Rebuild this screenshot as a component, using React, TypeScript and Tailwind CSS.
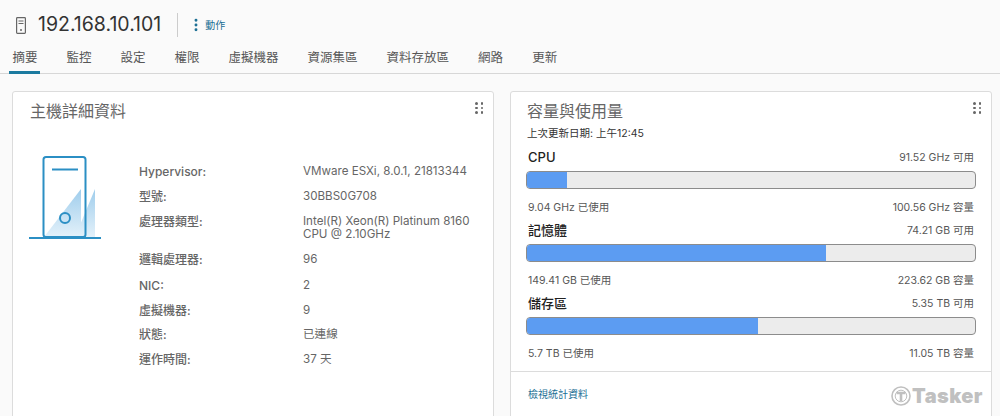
import { EllipsisVertical } from 'lucide-react';

const font = "font-['Inter','Noto_Sans_CJK_TC',sans-serif]";

const tabs = ['摘要', '監控', '設定', '權限', '虛擬機器', '資源集區', '資料存放區', '網路', '更新'];

const details = [
  { label: 'Hypervisor:', value: ['VMware ESXi, 8.0.1, 21813344'], h: 'h-[25px]' },
  { label: '型號:', value: ['30BBS0G708'], h: 'h-[25px]' },
  { label: '處理器類型:', value: ['Intel(R) Xeon(R) Platinum 8160', 'CPU @ 2.10GHz'], h: 'h-[38px]' },
  { label: '邏輯處理器:', value: ['96'], h: 'h-[26px]' },
  { label: 'NIC:', value: ['2'], h: 'h-[25px]' },
  { label: '虛擬機器:', value: ['9'], h: 'h-[24px]' },
  { label: '狀態:', value: ['已連線'], h: 'h-[25px]' },
  { label: '運作時間:', value: ['37 天'], h: 'h-[25px]' },
];

const meters = [
  { name: 'CPU', free: '91.52 GHz 可用', used: '9.04 GHz 已使用', total: '100.56 GHz 容量', bar: 'w-[9%]' },
  { name: '記憶體', free: '74.21 GB 可用', used: '149.41 GB 已使用', total: '223.62 GB 容量', bar: 'w-[66.8%]' },
  { name: '儲存區', free: '5.35 TB 可用', used: '5.7 TB 已使用', total: '11.05 TB 容量', bar: 'w-[51.5%]' },
];

function HostIcon() {
  return (
    <svg width="73" height="84" viewBox="0 0 73 84" fill="none" className="shrink-0">
      <defs>
        <linearGradient id="fade" x1="0" y1="0" x2="0" y2="1">
          <stop offset="0" stopColor="#9fcdec" />
          <stop offset="1" stopColor="#e3f1fa" />
        </linearGradient>
      </defs>
      <path d="M15 81 L52 33 V81 Z" fill="url(#fade)" />
      <path d="M46 81 L66 33 V81 Z" fill="url(#fade)" />
      <rect x="14.5" y="1" width="42" height="80" rx="2.5" stroke="#2b8fc4" strokeWidth="2" />
      <path d="M23 13.5 H49" stroke="#2b8fc4" strokeWidth="2" />
      <circle cx="36" cy="62" r="5" stroke="#2b8fc4" strokeWidth="2" />
      <path d="M0 82 H72" stroke="#2b8fc4" strokeWidth="2" />
    </svg>
  );
}

function Grip() {
  return (
    <div className="grid grid-cols-2 gap-x-[3px] gap-y-[2px]">
      {[0, 1, 2, 3, 4, 5].map((i) => (
        <span key={i} className="w-[2.5px] h-[2.5px] rounded-full bg-[#666]" />
      ))}
    </div>
  );
}

export default function App() {
  return (
    <div className={`relative w-[1000px] h-[416px] overflow-hidden bg-[#fafafa] text-[#565656] ${font}`}>
      <div className="h-[42px] flex items-center pl-[16px] pt-[8px]">
        <svg width="10" height="17" viewBox="0 0 10 17" fill="none" className="mr-[12px]">
          <rect x="0.6" y="0.6" width="8.8" height="15.8" rx="0.8" stroke="#666" strokeWidth="1.2" />
          <path d="M2.5 4 H7.5 M2.5 6.5 H7.5" stroke="#666" />
          <circle cx="5" cy="13" r="1" fill="#666" />
        </svg>
        <span className="text-[19.5px] text-[#333] leading-none">192.168.10.101</span>
        <div className="w-px h-[24px] bg-[#ccc] ml-[16px] mr-[10px]" />
        <EllipsisVertical size={16} strokeWidth={2.4} className="text-[#1c6f94]" />
        <span className="ml-[1px] text-[10px] text-[#1c6f94]">動作</span>
      </div>

      <div className="h-[32px] flex items-start gap-[29px] pl-[12.5px] border-b border-[#d7d7d7] pt-[6px]">
        {tabs.map((t, i) => (
          <div key={t} className="relative h-[25px] text-[12.5px] leading-[19px]">
            {t}
            {i === 0 && <div className="absolute left-[-3.5px] right-[-2.5px] top-[23px] h-[3px] bg-[#1b7a9f]" />}
          </div>
        ))}
      </div>

      <div className="flex gap-[16px] pl-[12px] pt-[17px]">
        <section className="w-[482px] h-[340px] bg-white border border-[#dcdcdc] rounded-[3px] relative pl-[16px] pt-[8px]">
          <h2 className="pl-[1px] text-[16px] leading-[22px] text-[#666]">主機詳細資料</h2>
          <div className="absolute right-[10px] top-[10px]"><Grip /></div>
          <div className="flex mt-[33px]">
            <div className="w-[110px] pt-[1px]"><HostIcon /></div>
            <div className="w-[164px] text-[12px] pt-[9px]">
              {details.map((d) => (
                <div key={d.label} className={`${d.h} leading-[15px] font-medium text-[#666]`}>{d.label}</div>
              ))}
            </div>
            <div className="text-[11.6px] text-[#666] pt-[9px]">
              {details.map((d) => (
                <div key={d.label} className={`${d.h} leading-[13px] pt-[1px]`}>
                  {d.value.map((line) => <div key={line}>{line}</div>)}
                </div>
              ))}
            </div>
          </div>
        </section>

        <section className="w-[482px] h-[340px] bg-white border border-[#dcdcdc] rounded-[3px] relative pl-[15px] pr-[15px] pt-[8px]">
          <h2 className="pl-[1px] text-[16px] leading-[22px] text-[#666]">容量與使用量</h2>
          <div className="absolute right-[10px] top-[10px]"><Grip /></div>
          <div className="pl-[1px] text-[10.5px] leading-[14px] text-[#333] mt-[5px] mb-[8px]">上次更新日期: 上午12:45</div>
          {meters.map((m) => (
            <div key={m.name} className="h-[73px]">
              <div className="flex justify-between items-center h-[18px] pl-[2px] pr-[2px]">
                <span className="text-[13px] font-medium text-[#222]">{m.name}</span>
                <span className="text-[10.5px] text-[#565656]">{m.free}</span>
              </div>
              <div className="h-[18px] mt-[4px] rounded-[4px] border border-[#8c8c8c] bg-[#ececec] overflow-hidden">
                <div className={`h-full bg-[#5c9cf2] ${m.bar}`} />
              </div>
              <div className="flex justify-between items-center h-[14px] mt-[12px] pl-[2px] pr-[2px] text-[10.5px] text-[#565656]">
                <span>{m.used}</span>
                <span>{m.total}</span>
              </div>
            </div>
          ))}
          <div className="border-t border-[#dcdcdc] -mx-[15px] mt-[3px] px-[17px] pt-[8px]">
            <span className="text-[10px] text-[#1c6f94]">檢視統計資料</span>
          </div>
        </section>
      </div>

      <div className="absolute left-[891px] top-[385px] flex items-center text-[#c0c0c0]">
        <svg width="20" height="22" viewBox="0 0 20 22" fill="none">
          <circle cx="10" cy="11" r="9" stroke="#c0c0c0" strokeWidth="1.6" />
          <circle cx="10" cy="11" r="5.8" stroke="#c0c0c0" strokeWidth="1" />
          <path d="M5.5 8 H14.5 M10 8 V16" stroke="#c0c0c0" strokeWidth="2.6" />
        </svg>
        <span className="text-[20px] font-black leading-none tracking-[0.4px] ml-[1px]">Tasker</span>
      </div>
    </div>
  );
}
